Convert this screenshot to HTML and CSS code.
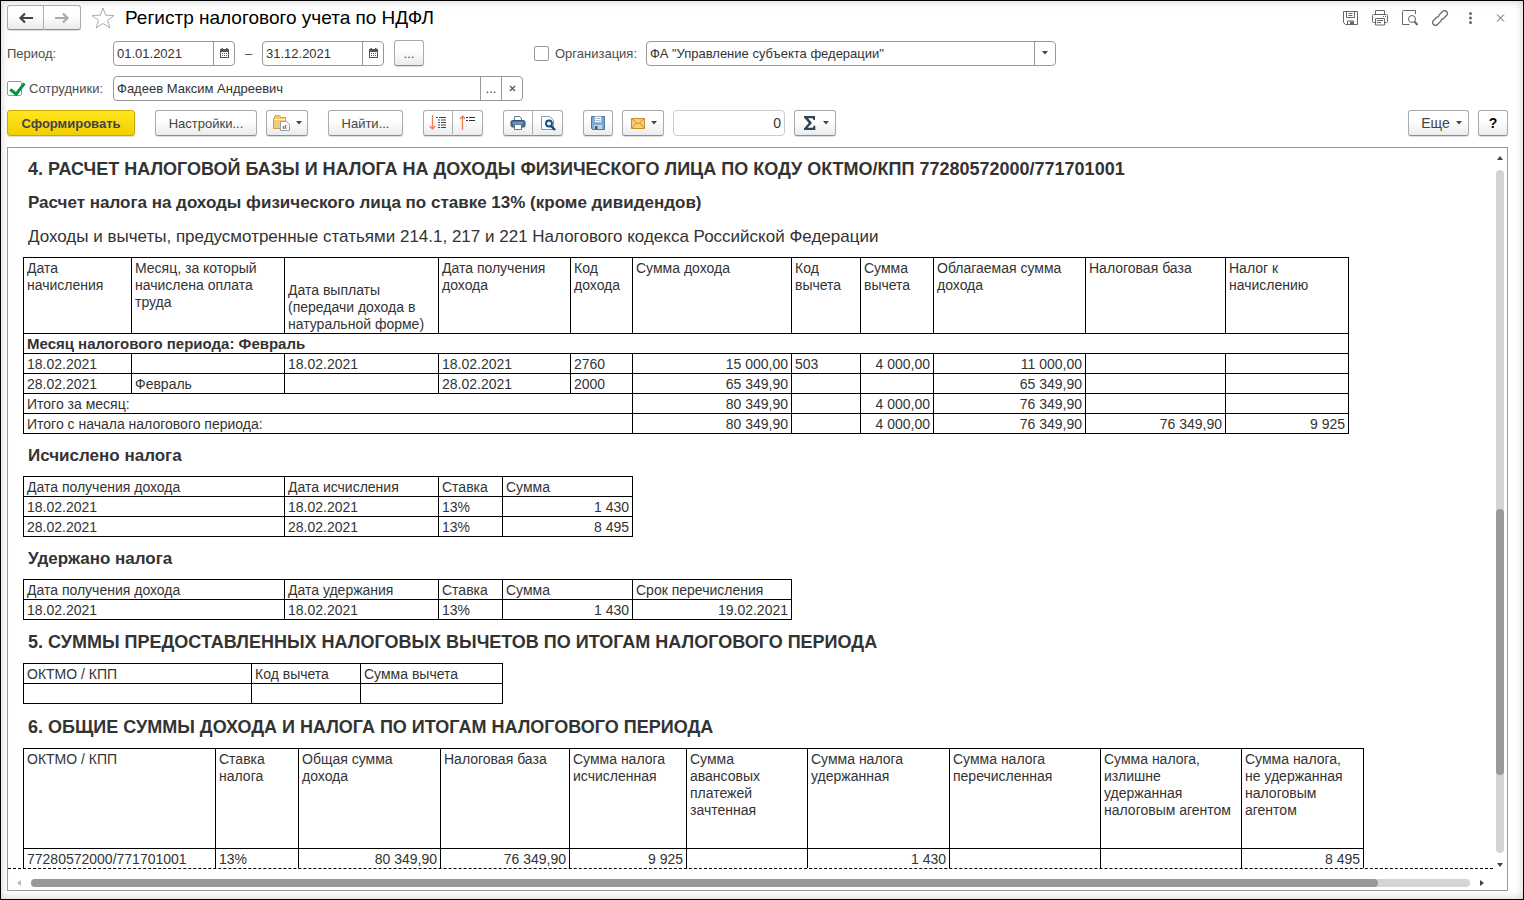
FILE: index.html
```html
<!DOCTYPE html>
<html lang="ru">
<head>
<meta charset="utf-8">
<title>Регистр налогового учета по НДФЛ</title>
<link rel="stylesheet" href="styles.css">
</head>
<body>
<main class="window">
  <header class="titlebar">
    <div class="group">
      <button class="btn nav" aria-label="Назад"><svg width="16" height="12" viewBox="0 0 16 12" fill="none" stroke="#444" stroke-width="2.200"><path d="M2 6h13M7 1.500 2.500 6 7 10.500"/></svg></button>
      <button class="btn nav" aria-label="Вперед"><svg width="16" height="12" viewBox="0 0 16 12" fill="none" stroke="#aaa" stroke-width="2.200"><path d="M14 6H1M9 1.500 13.500 6 9 10.500"/></svg></button>
    </div>
    <button class="plain star" aria-label="В избранное"><svg width="24" height="22" viewBox="0 0 24 22"><path d="M12 1 14.700 8.200 23 8.500 16.500 13.300 19 21 12 16.500 5 21 7.500 13.300 1 8.500 9.300 8.200Z" fill="#fff" stroke="#a8adb2"/></svg></button>
    <h1 class="title">Регистр налогового учета по НДФЛ</h1>
    <div class="window-tools">
      <button class="plain tool" aria-label="Сохранить"><svg width="16" height="16" viewBox="0 0 16 16" fill="none" stroke="#666"><path d="M1.500 1.500h14v13h-12l-2-2zM4.500 1.500v6h8v-6M6.500 3.500h4M6.500 5.500h4M5.500 14.500v-3.500h6v3.500"/><path d="M8.500 12h2.500v2H8.500z" fill="#666"/></svg></button>
      <button class="plain tool" aria-label="Печать"><svg width="16" height="16" viewBox="0 0 16 16" fill="none" stroke="#666"><path d="M3.500 4.500v-4h9v4M3 12.500H1.500a1 1 0 0 1-1-1v-6a1 1 0 0 1 1-1h13a1 1 0 0 1 1 1v6a1 1 0 0 1-1 1H13M3.500 8.500h9v6.500h-9zM5 10.500h6M5 12.500h4M11 6.500h1M13 6.500h1"/></svg></button>
      <button class="plain tool" aria-label="Просмотр"><svg width="16" height="16" viewBox="0 0 16 16" fill="none" stroke="#666"><path d="M13.500 4V.5H1.500a1 1 0 0 0-1 1v13h7"/><circle cx="10" cy="9" r="3.500"/><path d="m12.500 11.500 3 3.500" stroke-width="2"/></svg></button>
      <button class="plain tool" aria-label="Ссылка"><svg width="16" height="16" viewBox="0 0 16 16" fill="none" stroke="#666" stroke-width="1.200"><path d="M6.500 6.500 7 5l3.500-3.500a2.700 2.700 0 0 1 4 4L11.500 8.500a2.700 2.700 0 0 1-2.500.7M9.500 9.500 9 11l-3.500 3.500a2.700 2.700 0 0 1-4-4L4.500 7.500A2.700 2.700 0 0 1 7 6.800"/></svg></button>
      <button class="plain tool" aria-label="Меню"><svg width="16" height="16" viewBox="0 0 16 16" fill="#666"><circle cx="8.500" cy="3.500" r="1.500"/><circle cx="8.500" cy="8" r="1.500"/><circle cx="8.500" cy="12.500" r="1.500"/></svg></button>
      <button class="plain tool" aria-label="Закрыть"><svg width="16" height="16" viewBox="0 0 16 16" fill="none" stroke="#555"><path d="m5 4.500 7 7m0-7-7 7"/></svg></button>
    </div>
  </header>

  <div class="row">
    <label class="caption" for="from">Период:</label>
    <div class="field date"><input id="from" type="text" value="01.01.2021"><button class="addon cal" aria-label="Календарь"><svg width="9" height="10" viewBox="0 0 9 10"><path d="M1.500 0h1.500v1h3V0h1.500v1H9v9H0V1h1.500zM1 4v5h7V4z" fill="#555" fill-rule="evenodd"/><path d="M2 5.500h5M2 7.500h5" stroke="#555" stroke-dasharray="1 1"/></svg></button></div>
    <span class="dash">–</span>
    <div class="field date"><input type="text" value="31.12.2021" aria-label="Конец периода"><button class="addon cal" aria-label="Календарь"><svg width="9" height="10" viewBox="0 0 9 10"><path d="M1.500 0h1.500v1h3V0h1.500v1H9v9H0V1h1.500zM1 4v5h7V4z" fill="#555" fill-rule="evenodd"/><path d="M2 5.500h5M2 7.500h5" stroke="#555" stroke-dasharray="1 1"/></svg></button></div>
    <button class="btn small dots">...</button>
    <div class="org">
      <input class="check" type="checkbox" id="org-on">
      <label for="org-on">Организация:</label>
      <div class="field org-field">
        <select aria-label="Организация"><option>ФА "Управление субъекта федерации"</option></select>
        <span class="addon arrow"><svg width="6" height="4" viewBox="0 0 6 4"><path d="M0 0h6L3 3.500z" fill="#444"/></svg></span>
      </div>
    </div>
  </div>

  <div class="row">
    <div class="caption"><input class="check" type="checkbox" id="emp-on" checked><label for="emp-on">Сотрудники:</label></div>
    <div class="field employee"><input type="text" value="Фадеев Максим Андреевич" aria-label="Сотрудник"><button class="addon">...</button><button class="addon" aria-label="Очистить"><svg width="7" height="7" viewBox="0 0 7 7"><path d="m1 1 5 5m0-5L1 6" stroke="#555" stroke-width="1.200"/></svg></button></div>
  </div>

  <div class="row toolbar">
    <button class="btn primary">Сформировать</button>
    <div class="set">
      <button class="btn settings">Настройки...</button>
      <button class="btn menu" aria-label="Варианты"><svg width="18" height="18" viewBox="0 0 18 18"><path d="M.5 14.500v-10h1v-2l1-1h4l1 1v1h5v11z" fill="#f2cc72" stroke="#cfa040"/><path d="M1 5.500h11" stroke="#fff0bd"/><path d="M7.500 7.500h6l3 3v6h-9z" fill="#fff" stroke="#8ca0b4"/><path d="M10.500 15v-3" stroke="#48a058" stroke-width="1.500"/><path d="M12.500 15v-4" stroke="#e55b43" stroke-width="1.500"/></svg><svg width="6" height="4" viewBox="0 0 6 4"><path d="M0 0h6L3 3.500z" fill="#444"/></svg></button>
    </div>
    <button class="btn find">Найти...</button>
    <div class="group">
      <button class="btn small" aria-label="Развернуть"><svg width="18" height="18" viewBox="0 0 18 18" fill="none"><path d="M3.500 1v14M1 12l2.500 3L6 12" stroke="#f08050" stroke-width="1.300"/><path d="M7 3.500h2M10 3.500h7M9 6h2M12 6h5M9 8.500h2M12 8.500h5M9 11h2M12 11h5M9 13.500h2M12 13.500h5" stroke="#444"/></svg></button>
      <button class="btn small" aria-label="Свернуть"><svg width="18" height="18" viewBox="0 0 18 18" fill="none"><path d="M3.500 16V2M1 5l2.500-3L6 5" stroke="#f08050" stroke-width="1.300"/><path d="M7 3.500h2M10 3.500h6M7 6.500h2M10 6.500h6" stroke="#333"/></svg></button>
    </div>
    <div class="group">
      <button class="btn small" aria-label="Печать"><svg width="16" height="16" viewBox="0 0 16 16"><path d="M4.500 6V1.500h5l2 2V6" fill="#fff" stroke="#5a7893"/><rect x="1" y="5.500" width="14" height="6.500" rx="1.500" fill="#4a7296" stroke="#2d5374"/><path d="M3 8h10" stroke="#9fc0da"/><path d="M4.500 9.500h7v5h-7z" fill="#fff" stroke="#5a7893"/></svg></button>
      <button class="btn small" aria-label="Предварительный просмотр"><svg width="16" height="16" viewBox="0 0 16 16"><path d="M1.500 1.500h8l4 3.500v9.500h-12z" fill="#fff" stroke="#8799aa"/><circle cx="9" cy="8.500" r="3" fill="#e5f2fb" stroke="#0d4d80" stroke-width="1.800"/><path d="m11 11 4 4" stroke="#0d4d80" stroke-width="2.400"/></svg></button>
    </div>
    <div class="set">
      <button class="btn small" aria-label="Сохранить"><svg width="16" height="16" viewBox="0 0 16 16"><path d="M1.500 1.500h13v13h-12l-1-1z" fill="#7fa9d4" stroke="#4478ab"/><path d="M4.500 1.500h7v6h-7z" fill="#fff" stroke="#93afca"/><path d="M5.500 3.500h5M5.500 5.500h5" stroke="#a4bacf"/><path d="M4 10h8v4H4z" fill="#c8d5e0"/><path d="M5 11h2.500v3H5z" fill="#315c87"/></svg></button>
      <button class="btn menu" aria-label="Отправить"><svg width="16" height="16" viewBox="0 0 16 16"><path d="M1.500 3.500h13v10h-13z" fill="#f8cf78" stroke="#c98d27"/><path d="m2 4 6 5 6-5M2 13l4-5m8 5-4-5" fill="none" stroke="#c98d27"/></svg><svg width="6" height="4" viewBox="0 0 6 4"><path d="M0 0h6L3 3.500z" fill="#444"/></svg></button>
      <input class="sum" type="text" value="0" aria-label="Сумма">
      <button class="btn menu" aria-label="Функция"><svg width="16" height="16" viewBox="0 0 16 16"><path d="M2 1h11v4h-1.500l-.8-1.800H6L10 8l-4.500 4.800h5.300l1-2h1.500V15H2v-1.500L6.800 8 2 2.500z" fill="#2e4454"/></svg><svg width="6" height="4" viewBox="0 0 6 4"><path d="M0 0h6L3 3.500z" fill="#444"/></svg></button>
    </div>
    <div class="set end">
      <button class="btn more">Еще <svg width="6" height="4" viewBox="0 0 6 4"><path d="M0 0h6L3 3.500z" fill="#444"/></svg></button>
      <button class="btn small help">?</button>
    </div>
  </div>

  <section class="viewer">
    <article class="report">
      <h2 class="section first">4. РАСЧЕТ НАЛОГОВОЙ БАЗЫ И НАЛОГА НА ДОХОДЫ ФИЗИЧЕСКОГО ЛИЦА ПО КОДУ ОКТМО/КПП 77280572000/771701001</h2>
      <h3 class="sub">Расчет налога на доходы физического лица по ставке 13% (кроме дивидендов)</h3>
      <p class="note">Доходы и вычеты, предусмотренные статьями 214.1, 217 и 221 Налогового кодекса Российской Федерации</p>
      <table class="grid income">
        <colgroup><col class="w108"><col class="w153"><col class="w154"><col class="w132"><col class="w62"><col class="w159"><col class="w69"><col class="w73"><col class="w152"><col class="w140"><col class="w123"></colgroup>
        <thead><tr class="head"><th>Дата начисления</th><th>Месяц, за который начислена оплата труда</th><th class="low">Дата выплаты (передачи дохода в натуральной форме)</th><th>Дата получения дохода</th><th>Код дохода</th><th>Сумма дохода</th><th>Код вычета</th><th>Сумма вычета</th><th>Облагаемая сумма дохода</th><th>Налоговая база</th><th>Налог к начислению</th></tr></thead>
        <tbody>
          <tr><th class="month" colspan="11">Месяц налогового периода: Февраль</th></tr>
          <tr><td>18.02.2021</td><td></td><td>18.02.2021</td><td>18.02.2021</td><td>2760</td><td class="num">15 000,00</td><td>503</td><td class="num">4 000,00</td><td class="num">11 000,00</td><td></td><td></td></tr>
          <tr><td>28.02.2021</td><td>Февраль</td><td></td><td>28.02.2021</td><td>2000</td><td class="num">65 349,90</td><td></td><td></td><td class="num">65 349,90</td><td></td><td></td></tr>
          <tr><td colspan="5">Итого за месяц:</td><td class="num">80 349,90</td><td></td><td class="num">4 000,00</td><td class="num">76 349,90</td><td></td><td></td></tr>
          <tr><td colspan="5">Итого с начала налогового периода:</td><td class="num">80 349,90</td><td></td><td class="num">4 000,00</td><td class="num">76 349,90</td><td class="num">76 349,90</td><td class="num">9 925</td></tr>
        </tbody>
      </table>
      <h3 class="sub">Исчислено налога</h3>
      <table class="grid calculated">
        <colgroup><col class="w261"><col class="w154"><col class="w64"><col class="w130"></colgroup>
        <thead><tr><th>Дата получения дохода</th><th>Дата исчисления</th><th>Ставка</th><th>Сумма</th></tr></thead>
        <tbody>
          <tr><td>18.02.2021</td><td>18.02.2021</td><td>13%</td><td class="num">1 430</td></tr>
          <tr><td>28.02.2021</td><td>28.02.2021</td><td>13%</td><td class="num">8 495</td></tr>
        </tbody>
      </table>
      <h3 class="sub">Удержано налога</h3>
      <table class="grid withheld">
        <colgroup><col class="w261"><col class="w154"><col class="w64"><col class="w130"><col class="w159"></colgroup>
        <thead><tr><th>Дата получения дохода</th><th>Дата удержания</th><th>Ставка</th><th>Сумма</th><th>Срок перечисления</th></tr></thead>
        <tbody><tr><td>18.02.2021</td><td>18.02.2021</td><td>13%</td><td class="num">1 430</td><td class="num">19.02.2021</td></tr></tbody>
      </table>
      <h2 class="section">5. СУММЫ ПРЕДОСТАВЛЕННЫХ НАЛОГОВЫХ ВЫЧЕТОВ ПО ИТОГАМ НАЛОГОВОГО ПЕРИОДА</h2>
      <table class="grid deductions">
        <colgroup><col class="w228"><col class="w109"><col class="w142"></colgroup>
        <thead><tr><th>ОКТМО / КПП</th><th>Код вычета</th><th>Сумма вычета</th></tr></thead>
        <tbody><tr><td></td><td></td><td></td></tr></tbody>
      </table>
      <h2 class="section">6. ОБЩИЕ СУММЫ ДОХОДА И НАЛОГА ПО ИТОГАМ НАЛОГОВОГО ПЕРИОДА</h2>
      <table class="grid totals">
        <colgroup><col class="w192"><col class="w83"><col class="w142"><col class="w129"><col class="w117"><col class="w121"><col class="w142"><col class="w151"><col class="w141"><col class="w122"></colgroup>
        <thead><tr class="tall"><th>ОКТМО / КПП</th><th>Ставка налога</th><th>Общая сумма дохода</th><th>Налоговая база</th><th>Сумма налога исчисленная</th><th>Сумма авансовых платежей зачтенная</th><th>Сумма налога удержанная</th><th>Сумма налога перечисленная</th><th>Сумма налога, излишне удержанная налоговым агентом</th><th>Сумма налога, не удержанная налоговым агентом</th></tr></thead>
        <tbody><tr><td>77280572000/771701001</td><td>13%</td><td class="num">80 349,90</td><td class="num">76 349,90</td><td class="num">9 925</td><td></td><td class="num">1 430</td><td></td><td></td><td class="num">8 495</td></tr></tbody>
      </table>
    </article>
    <div class="vscroll">
      <svg width="6" height="4" viewBox="0 0 6 4"><path d="M0 4h6L3 0z" fill="#444"/></svg>
      <div class="track"><div class="thumb"></div></div>
      <svg width="6" height="4" viewBox="0 0 6 4"><path d="M0 0h6L3 4z" fill="#444"/></svg>
    </div>
    <div class="hscroll">
      <svg width="4" height="6" viewBox="0 0 4 6"><path d="M4 0v6L0 3z" fill="#bbb"/></svg>
      <div class="track"><div class="thumb"></div></div>
      <svg width="4" height="6" viewBox="0 0 4 6"><path d="M0 0v6L4 3z" fill="#444"/></svg>
    </div>
  </section>
</main>
</body>
</html>
```
FILE: styles.css
```css
* { box-sizing: border-box; }
body { margin: 0; background: #fff; color: #333; font: 14px/17px "Liberation Sans", Arial, sans-serif; }
button, input, select { font: inherit; color: inherit; margin: 0; }
svg { display: block; flex: none; }
h1, h2, h3, p { margin: 0; }

.window { height: 100vh; display: flex; flex-direction: column; padding: 4px 15px 8px 6px; border: 1px solid #000; box-shadow: inset 0 0 8px #ccc; }
.titlebar { display: flex; align-items: center; height: 25px; margin: 0 -7px 10px 0; }
.title { flex: 1; color: #000; font-size: 19px; line-height: 24px; font-weight: 400; }
.window-tools { display: flex; }
.plain { border: 0; background: none; padding: 0; }
.star { margin: 0 10px; }
.tool { width: 30px; height: 24px; display: flex; align-items: center; justify-content: center; }

.row { display: flex; align-items: center; margin-bottom: 10px; color: #4d4d4d; font-size: 13px; }
.caption { width: 106px; display: flex; align-items: center; gap: 7px; }
.field { height: 25px; display: flex; border: 1px solid #999; border-radius: 4px; background: #fff; color: #333; }
.field input, .field select { flex: 1; min-width: 0; border: 0; padding: 0 3px; background: none; appearance: none; outline: 0; }
.addon { width: 21px; border: 0; border-left: 1px solid #999; background: none; padding: 0; display: flex; align-items: center; justify-content: center; }
.date { width: 122px; }
.dash { width: 27px; text-align: center; }
.dots { margin-left: 10px; }
.org { display: flex; align-items: center; gap: 6px; margin-left: 110px; }
.org-field { width: 410px; margin-left: 3px; }
.arrow { pointer-events: none; }
.employee { width: 410px; }
.check { appearance: none; width: 15px; height: 15px; border: 1px solid #999; border-radius: 2px; background: #fff; position: relative; }
.check:checked::after { content: ""; position: absolute; left: 5px; top: -2px; width: 6px; height: 12px; border: solid #00963f; border-width: 0 3px 3px 0; transform: rotate(38deg); }

.btn { height: 26px; display: flex; align-items: center; justify-content: center; padding: 0; border: 1px solid #aaa; border-bottom-color: #8c8c8c; border-radius: 3px; background: linear-gradient(#fff 40%, #ebebeb); color: #444; box-shadow: 0 1px 1px #ddd; }
.group { display: flex; }
.group .btn:first-child { border-radius: 3px 0 0 3px; }
.group .btn:last-child { border-left: 0; border-radius: 0 3px 3px 0; }
.nav { width: 37px; height: 25px; }
.small { width: 30px; }
.menu { width: 42px; gap: 5px; }
.toolbar { gap: 20px; margin: -1px 0 11px; font-size: 14px; }
.set { display: flex; gap: 9px; }
.primary { width: 128px; font-size: 13px; font-weight: 700; border-color: #c9a800; background: linear-gradient(#ffe51f, #f3cf00); }
.settings { width: 102px; font-size: 13px; }
.find { width: 75px; font-size: 13px; }
.sum { width: 112px; height: 26px; border: 1px solid #ccc; border-radius: 4px; padding: 0 3px; text-align: right; color: #333; }
.end { margin-left: auto; }
.more { width: 61px; gap: 6px; padding-left: 6px; }
.help { color: #000; font-weight: 700; }

.viewer { flex: 1; min-height: 0; display: grid; grid-template: minmax(0, 1fr) 21px / minmax(0, 1fr) 14px; border: 1px solid #999; }
.report { overflow: hidden; padding-left: 15px; border-bottom: 1px dashed #000; }
.section, .sub, .note { padding-left: 5px; line-height: 20px; white-space: nowrap; }
.section { font-size: 18px; margin: 12px 0 11px; }
.first { margin: 11px 0 14px; }
.sub { font-size: 17px; margin: 12px 0 10px; }
.first + .sub { margin: 0 0 14px; }
.note { font-size: 17px; margin-bottom: 10px; }
.deductions + .section { margin-top: 13px; }

.grid { table-layout: fixed; border-collapse: collapse; }
.grid th, .grid td { height: 20px; padding: 2px 3px 0; border: 1px solid #000; text-align: left; vertical-align: top; font-weight: 400; }
.grid .num { text-align: right; }
.grid .low { vertical-align: bottom; }
.grid .month { padding-top: 1px; font-size: 15px; font-weight: 700; }
.grid .head th { height: 76px; }
.grid .tall th { height: 100px; }
.income { width: 1326px; }
.calculated { width: 610px; }
.withheld { width: 769px; }
.deductions { width: 480px; }
.totals { width: 1341px; }
.w62 { width: 62px; } .w64 { width: 64px; } .w69 { width: 69px; } .w73 { width: 73px; } .w83 { width: 83px; }
.w108 { width: 108px; } .w109 { width: 109px; } .w117 { width: 117px; } .w121 { width: 121px; } .w122 { width: 122px; }
.w123 { width: 123px; } .w129 { width: 129px; } .w130 { width: 130px; } .w132 { width: 132px; } .w140 { width: 140px; }
.w141 { width: 141px; } .w142 { width: 142px; } .w151 { width: 151px; } .w152 { width: 152px; } .w153 { width: 153px; }
.w154 { width: 154px; } .w159 { width: 159px; } .w192 { width: 192px; } .w228 { width: 228px; } .w261 { width: 261px; }

.track { flex: 1; display: flex; border-radius: 4px; background: #d4d4d4; }
.thumb { border-radius: 4px; background: #999; }
.vscroll { display: flex; flex-direction: column; align-items: center; gap: 10px; padding: 8px 0 2px; }
.vscroll .track { width: 8px; flex-direction: column; justify-content: flex-end; padding-bottom: 78px; }
.vscroll .thumb { height: 44%; }
.hscroll { grid-column: 1; display: flex; align-items: center; gap: 10px; padding: 6px 9px 0 9px; }
.hscroll .track { height: 8px; padding-right: 6px; }
.hscroll .thumb { width: 94%; }
```
